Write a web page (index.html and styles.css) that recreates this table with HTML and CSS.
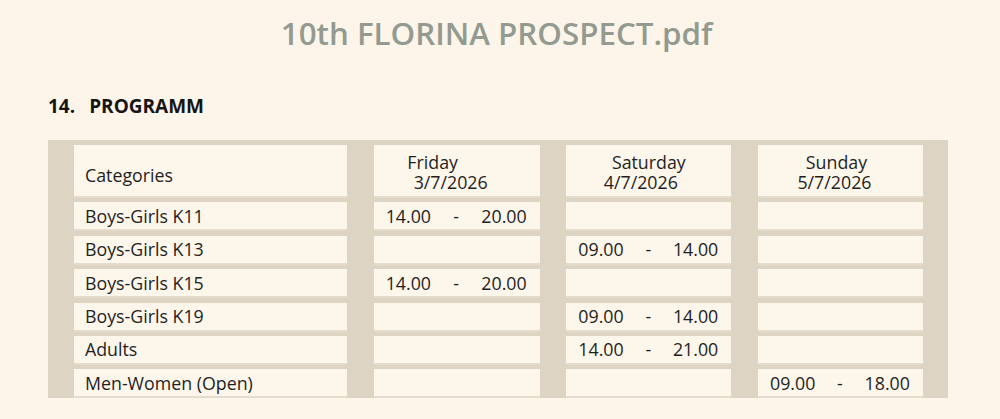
FILE: index.html
```html
<!DOCTYPE html>
<html>
<head>
<meta charset="utf-8">
<link rel="stylesheet" href="styles.css">
</head>
<body>
<h1 class="title">10th FLORINA PROSPECT.pdf</h1>
<h2 class="section"><span class="num">14.</span><span>PROGRAMM</span></h2>
<div class="panel">
  <div class="grid">
    <div class="cell head cat">Categories</div>
    <div class="cell head day fri"><span>Friday</span><span class="date">3/7/2026</span></div>
    <div class="cell head day sat"><span>Saturday</span><span class="date">4/7/2026</span></div>
    <div class="cell head day sun"><span>Sunday</span><span class="date">5/7/2026</span></div>

    <div class="cell name">Boys-Girls K11</div>
    <div class="cell time"><span>14.00</span><span>-</span><span>20.00</span></div>
    <div class="cell"></div>
    <div class="cell"></div>

    <div class="cell name">Boys-Girls K13</div>
    <div class="cell"></div>
    <div class="cell time"><span>09.00</span><span>-</span><span>14.00</span></div>
    <div class="cell"></div>

    <div class="cell name">Boys-Girls K15</div>
    <div class="cell time"><span>14.00</span><span>-</span><span>20.00</span></div>
    <div class="cell"></div>
    <div class="cell"></div>

    <div class="cell name">Boys-Girls K19</div>
    <div class="cell"></div>
    <div class="cell time"><span>09.00</span><span>-</span><span>14.00</span></div>
    <div class="cell"></div>

    <div class="cell name">Adults</div>
    <div class="cell"></div>
    <div class="cell time"><span>14.00</span><span>-</span><span>21.00</span></div>
    <div class="cell"></div>

    <div class="cell name">Men-Women (Open)</div>
    <div class="cell"></div>
    <div class="cell"></div>
    <div class="cell time"><span>09.00</span><span>-</span><span>18.00</span></div>
  </div>
</div>
</body>
</html>
```
FILE: styles.css
```css
html, body {
  margin: 0;
  padding: 0;
  background: #fdf5ea;
}
body {
  width: 1000px;
  height: 419px;
  overflow: hidden;
  font-family: "Open Sans", "Liberation Sans", sans-serif;
  color: #1f1f1f;
}
.title {
  margin: 0;
  padding: 11px 7px 0 0;
  height: 44px;
  text-align: center;
  font-size: 31.3px;
  line-height: 44px;
  font-weight: 600;
  color: #939a8f;
  letter-spacing: 0;
}
.section {
  margin: 38px 0 0 48px;
  display: flex;
  gap: 14px;
  font-size: 19px;
  line-height: 26px;
  font-weight: 700;
  color: #151515;
}
.panel {
  margin: 21px 0 0 48px;
  width: 900px;
  height: 258px;
  box-sizing: border-box;
  padding: 5px 25px 0 26px;
  background: #ded4c4;
}
.grid {
  display: grid;
  grid-template-columns: 273px 166px 165px 165px;
  grid-template-rows: 51px repeat(6, 27px);
  column-gap: 26.67px;
  row-gap: 6.4px;
}
.cell {
  background: #fdf6eb;
  box-shadow: 0 2px 0 #e6dccc;
  font-size: 17.8px;
  line-height: 24px;
  display: flex;
  align-items: center;
}
.name {
  padding-left: 11px;
}
.cat {
  padding-left: 11px;
  padding-top: 9px;
}
.day {
  flex-direction: column;
  justify-content: center;
  line-height: 20px;
  padding-top: 2px;
}
.day span {
  display: block;
}
.fri span:first-child { margin-right: 48px; }
.fri .date { margin-right: 12px; }
.sat .date { margin-right: 16px; }
.sun span:first-child { margin-right: 8px; }
.sun .date { margin-right: 12px; }
.time {
  justify-content: space-between;
  padding: 0 13px 0 12px;
}
```
